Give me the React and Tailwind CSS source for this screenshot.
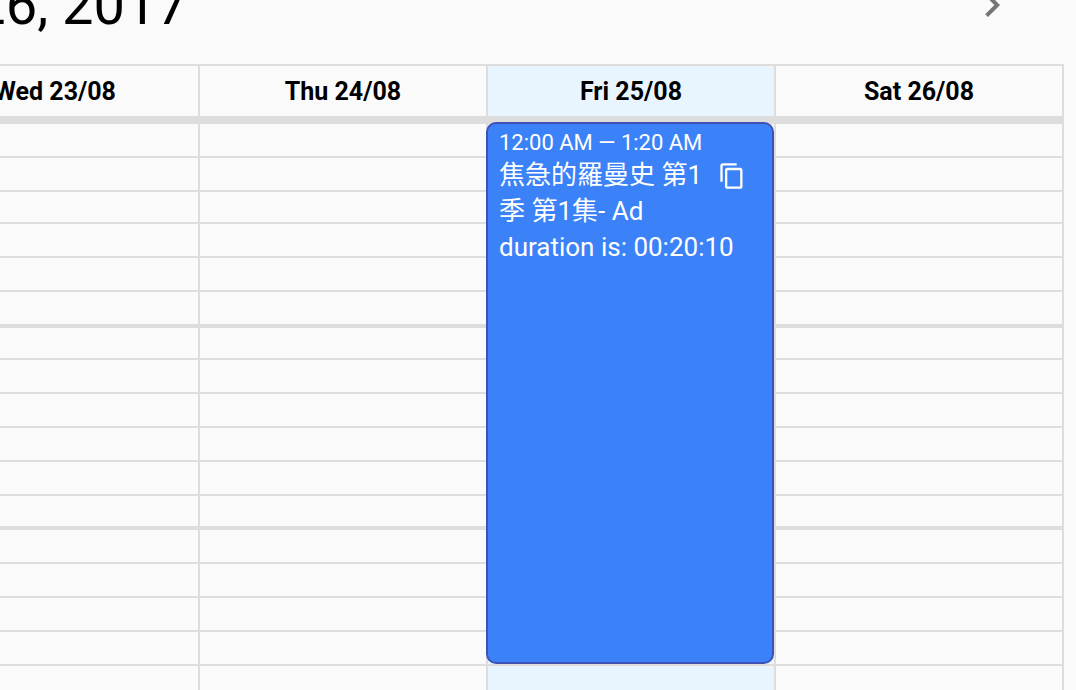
import { MdChevronRight, MdContentCopy } from "react-icons/md";

const days = [
  { label: "Wed 23/08" },
  { label: "Thu 24/08" },
  { label: "Fri 25/08", today: true },
  { label: "Sat 26/08" },
];

const line = "h-[34px] border-b-2";
const shortLine = "h-8 border-b-2";

const slots = [
  line, line, shortLine, line, line, "h-9 border-b-4",
  shortLine, line, line, line, line, "h-[34px] border-b-4",
  line, line, line, line, shortLine, line,
];

function Event() {
  return (
    <article className="absolute -top-0.5 right-0 -left-0.5 z-10 h-[542px] rounded-[10px] border-2 border-[#3f51b5] bg-[#3b82f8] pt-[5px] pr-8 pl-[11px] text-left text-white">
      <p className="text-[22px] leading-7 whitespace-nowrap">12:00 AM — 1:20 AM</p>
      <button type="button" aria-label="Copy event" className="float-right mt-[5px] -mr-1.5 ml-2 block">
        <MdContentCopy className="size-7" />
      </button>
      <p className="text-[26px] leading-9">焦急的羅曼史 第1季 第1集- Ad duration is: 00:20:10</p>
    </article>
  );
}

export default function App() {
  return (
    <main className="h-screen overflow-hidden bg-[#fafafa] font-['Roboto','Noto_Sans_CJK_TC',sans-serif] text-black">
      <header className="flex h-16 items-start justify-between pr-[60px]">
        <h1 className="-mt-[27px] flex w-[188px] justify-end text-[56px] leading-[64px] whitespace-nowrap">26, 2017</h1>
        <button type="button" aria-label="Next week" className="-mt-[19px] text-[#757575]">
          <MdChevronRight className="size-12" />
        </button>
      </header>
      <div className="mr-3 -ml-[88px]">
        <table className="w-full table-fixed border-separate border-spacing-0">
          <thead>
            <tr>
              {days.map((d) => (
                <th
                  key={d.label}
                  scope="col"
                  className={`h-[60px] border-t-2 border-r-2 border-b-8 border-[#ddd] px-0 pt-0.5 pb-0 text-[25px] leading-9 font-bold ${d.today ? "bg-[#e8f5ff]" : ""}`}
                >
                  {d.label}
                </th>
              ))}
            </tr>
          </thead>
          <tbody>
            {slots.map((slot, i) => (
              <tr key={i}>
                {days.map((d) => (
                  <td
                    key={d.label}
                    className={`relative border-r-2 border-[#ddd] p-0 ${slot} ${d.today ? "bg-[#e8f5ff]" : ""}`}
                  >
                    {d.today && i === 0 && <Event />}
                  </td>
                ))}
              </tr>
            ))}
          </tbody>
        </table>
      </div>
    </main>
  );
}
